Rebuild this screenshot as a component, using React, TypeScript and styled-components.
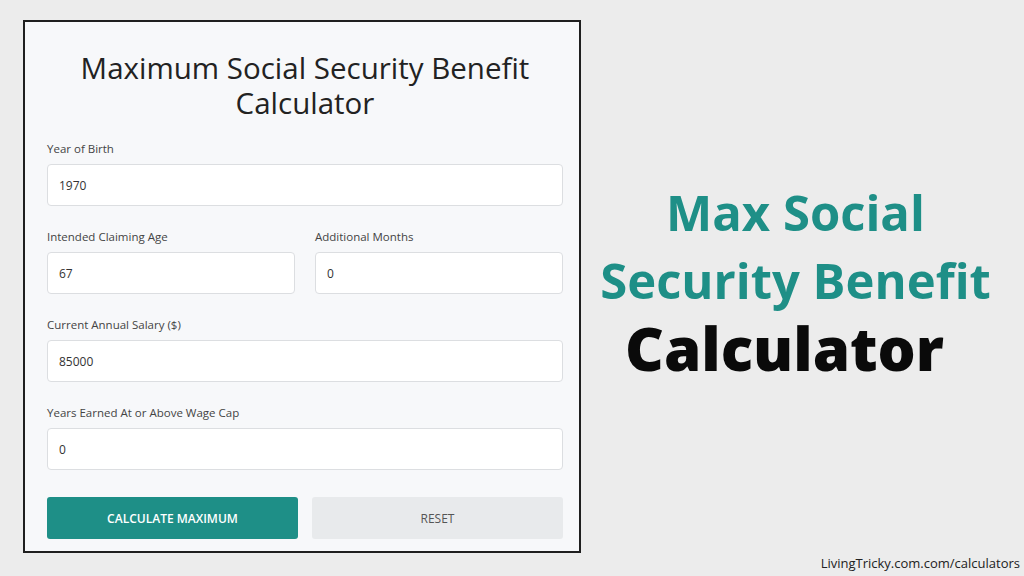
import styled, { createGlobalStyle } from 'styled-components';

const GlobalStyle = createGlobalStyle`
  html, body {
    margin: 0;
    padding: 0;
    background: #ececec;
  }
  * {
    box-sizing: border-box;
  }
`;

const Page = styled.div`
  width: 1024px;
  height: 576px;
  display: flex;
  position: relative;
  overflow: hidden;
  background: #ececec;
`;

const Card = styled.div`
  width: 558px;
  height: 533px;
  margin: 20px 0 0 23px;
  padding: 28px 16px 0 22px;
  background: #f7f8fa;
  border: 2px solid #1f1f1f;
  font-family: 'Open Sans', 'Noto Sans', sans-serif;
`;

const Title = styled.h1`
  margin: 0 0 21px;
  font-size: 29.5px;
  line-height: 35px;
  font-weight: 400;
  text-align: center;
  color: #222;
`;

const Row = styled.div`
  display: flex;
  gap: 20px;
`;

const Field = styled.div<{ $last?: boolean }>`
  flex: 1;
  margin-bottom: ${({ $last }) => ($last ? '0' : '23px')};
`;

const Label = styled.label`
  display: block;
  font-size: 11.5px;
  line-height: 16px;
  color: #444;
  margin-bottom: 7px;
`;

const Input = styled.input`
  width: 100%;
  height: 42px;
  padding: 0 11px;
  border: 1px solid #dcdee1;
  border-radius: 4px;
  background: #fff;
  font-family: inherit;
  font-size: 12px;
  color: #333;
  outline: none;
`;

const Buttons = styled.div`
  display: flex;
  gap: 14px;
  margin-top: 27px;
`;

const Button = styled.button<{ $primary?: boolean }>`
  flex: 1;
  height: 42px;
  border: none;
  border-radius: 3px;
  font-family: inherit;
  font-size: 12px;
  font-weight: ${({ $primary }) => ($primary ? 600 : 400)};
  text-transform: uppercase;
  background: ${({ $primary }) => ($primary ? '#1e8f87' : '#e8eaec')};
  color: ${({ $primary }) => ($primary ? '#fff' : '#555')};
  cursor: pointer;
`;

const Side = styled.div`
  flex: 1;
  display: flex;
  flex-direction: column;
  align-items: center;
  justify-content: center;
  padding: 0 14px 16px 0;
  font-family: 'Open Sans', 'Noto Sans', sans-serif;
`;

const Headline = styled.div<{ $dark?: boolean }>`
  font-size: ${({ $dark }) => ($dark ? '60px' : '49px')};
  line-height: 68px;
  font-weight: ${({ $dark }) => ($dark ? 800 : 700)};
  color: ${({ $dark }) => ($dark ? '#0a0a0a' : '#1e8f87')};
  margin-right: ${({ $dark }) => ($dark ? '22px' : '0')};
  white-space: nowrap;
`;

const Footer = styled.div`
  position: absolute;
  right: 4px;
  bottom: 4px;
  font-family: 'Open Sans', sans-serif;
  font-size: 13px;
  color: #222;
`;

export default function App() {
  return (
    <>
      <GlobalStyle />
      <Page>
        <Card>
          <Title>
            Maximum Social Security Benefit
            <br />
            Calculator
          </Title>
          <Field>
            <Label>Year of Birth</Label>
            <Input defaultValue="1970" />
          </Field>
          <Row>
            <Field>
              <Label>Intended Claiming Age</Label>
              <Input defaultValue="67" />
            </Field>
            <Field>
              <Label>Additional Months</Label>
              <Input defaultValue="0" />
            </Field>
          </Row>
          <Field>
            <Label>Current Annual Salary ($)</Label>
            <Input defaultValue="85000" />
          </Field>
          <Field $last>
            <Label>Years Earned At or Above Wage Cap</Label>
            <Input defaultValue="0" />
          </Field>
          <Buttons>
            <Button $primary>Calculate Maximum</Button>
            <Button>Reset</Button>
          </Buttons>
        </Card>
        <Side>
          <Headline>Max Social</Headline>
          <Headline>Security Benefit</Headline>
          <Headline $dark>Calculator</Headline>
        </Side>
        <Footer>LivingTricky.com.com/calculators</Footer>
      </Page>
    </>
  );
}
